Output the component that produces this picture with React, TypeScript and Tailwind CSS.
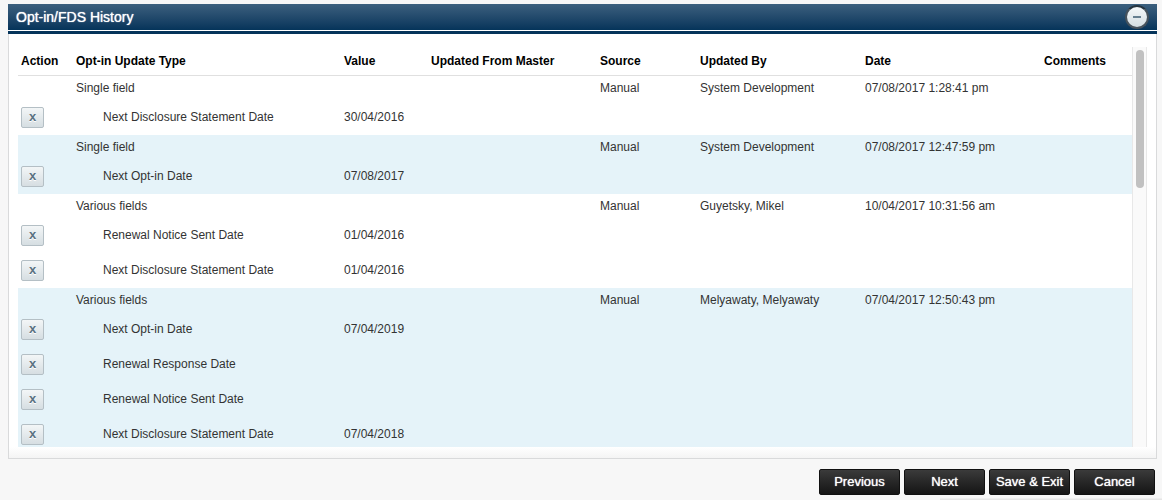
const columns = [
  { label: "Action", width: "w-[55px]" },
  { label: "Opt-in Update Type", width: "w-[268px]" },
  { label: "Value", width: "w-[87px]" },
  { label: "Updated From Master", width: "w-[169px]" },
  { label: "Source", width: "w-[100px]" },
  { label: "Updated By", width: "w-[165px]" },
  { label: "Date", width: "w-[179px]" },
  { label: "Comments", width: "w-[91px]" },
]

const updates = [
  {
    type: "Single field",
    source: "Manual",
    updatedBy: "System Development",
    date: "07/08/2017 1:28:41 pm",
    fields: [{ name: "Next Disclosure Statement Date", value: "30/04/2016" }],
  },
  {
    type: "Single field",
    source: "Manual",
    updatedBy: "System Development",
    date: "07/08/2017 12:47:59 pm",
    fields: [{ name: "Next Opt-in Date", value: "07/08/2017" }],
  },
  {
    type: "Various fields",
    source: "Manual",
    updatedBy: "Guyetsky, Mikel",
    date: "10/04/2017 10:31:56 am",
    fields: [
      { name: "Renewal Notice Sent Date", value: "01/04/2016" },
      { name: "Next Disclosure Statement Date", value: "01/04/2016" },
    ],
  },
  {
    type: "Various fields",
    source: "Manual",
    updatedBy: "Melyawaty, Melyawaty",
    date: "07/04/2017 12:50:43 pm",
    fields: [
      { name: "Next Opt-in Date", value: "07/04/2019" },
      { name: "Renewal Response Date", value: "" },
      { name: "Renewal Notice Sent Date", value: "" },
      { name: "Next Disclosure Statement Date", value: "07/04/2018" },
    ],
  },
]

const actions = ["Previous", "Next", "Save & Exit", "Cancel"]

function HistoryTable() {
  return (
    <table className="w-full table-fixed border-separate border-spacing-0 text-left text-xs text-[#333]">
      <thead>
        <tr className="h-[29px] text-black">
          {columns.map((column) => (
            <th
              key={column.label}
              className={`${column.width} whitespace-nowrap border-b border-[#e0e0e0] pl-[3px] font-bold`}
            >
              {column.label}
            </th>
          ))}
        </tr>
      </thead>
      {updates.map((update, index) => (
        <tbody key={index} className="odd:bg-[#e5f3f9]">
          <tr className="h-6">
            <td />
            <td className="pl-[3px]">{update.type}</td>
            <td />
            <td />
            <td className="pl-[3px]">{update.source}</td>
            <td className="pl-[3px]">{update.updatedBy}</td>
            <td className="pl-[3px]">{update.date}</td>
            <td />
          </tr>
          {update.fields.map((field) => (
            <tr key={field.name} className="h-[35px]">
              <td className="pl-[3px]">
                <button
                  type="button"
                  aria-label={`Remove ${field.name}`}
                  className="flex h-[21px] w-[23px] items-center justify-center rounded-[2px] border border-[#b4bfc5] bg-linear-to-b from-[#f3f6f7] to-[#d6dee2] pb-px text-[13px] font-bold text-[#5b7282] [text-shadow:0_1px_0_#fff]"
                >
                  x
                </button>
              </td>
              <td className="pb-[2px] pl-[30px]">{field.name}</td>
              <td className="pb-[2px] pl-[3px]">{field.value}</td>
              <td colSpan={5} />
            </tr>
          ))}
        </tbody>
      ))}
    </table>
  )
}

export default function App() {
  return (
    <main className="min-h-screen bg-[#f7f7f7] pt-1 pr-[5px] pl-2 font-['Liberation_Sans',Arial,sans-serif]">
      <section>
        <header className="flex h-[26px] items-center justify-between bg-linear-to-b from-[#3c607e] to-[#05345a] px-2">
          <h1 className="text-sm text-white [text-shadow:0_0_1px_#fff]">Opt-in/FDS History</h1>
          <button
            type="button"
            aria-label="Collapse"
            className="flex size-6 items-center justify-center rounded-full border-2 border-[#46525c] border-t-[#26343f] bg-linear-to-b from-[#f5f8f9] to-[#d3dde2]"
          >
            <span className="h-[2px] w-2 bg-[#667f90]" />
          </button>
        </header>
        <div className="h-1 border-t border-white bg-[#05345a]" />
        <div className="border-x border-b border-[#d9dadb] bg-white px-[9px] pt-[13px]">
          <div className="flex max-h-[400px]">
            <div className="grow overflow-y-auto [scrollbar-width:none]">
              <HistoryTable />
            </div>
            <div className="w-[15px] shrink-0 border-x border-[#e8e8e8] bg-[#fafafa] px-[3px] pt-[3px]">
              <div className="h-[138px] w-2 rounded-full bg-[#c1c1c1]" />
            </div>
          </div>
          <div className="-mx-[9px] h-[11px] bg-linear-to-b from-white to-[#f4f4f4]" />
        </div>
      </section>

      <footer className="flex justify-end gap-1 pt-[10px] pr-[2px]">
        {actions.map((action) => (
          <button
            key={action}
            type="button"
            className="h-[26px] w-[81px] rounded-[2px] border border-[#111] bg-linear-to-b from-[#3b3b3b] to-[#151515] text-[13px] text-white [text-shadow:0_0_1px_#fff]"
          >
            {action}
          </button>
        ))}
      </footer>
      <div className="mt-[3px] -mr-[5px] ml-auto h-[2px] w-[222px] bg-linear-to-b from-[#f2f2f2] to-[#e2e2e2]" />
    </main>
  )
}
